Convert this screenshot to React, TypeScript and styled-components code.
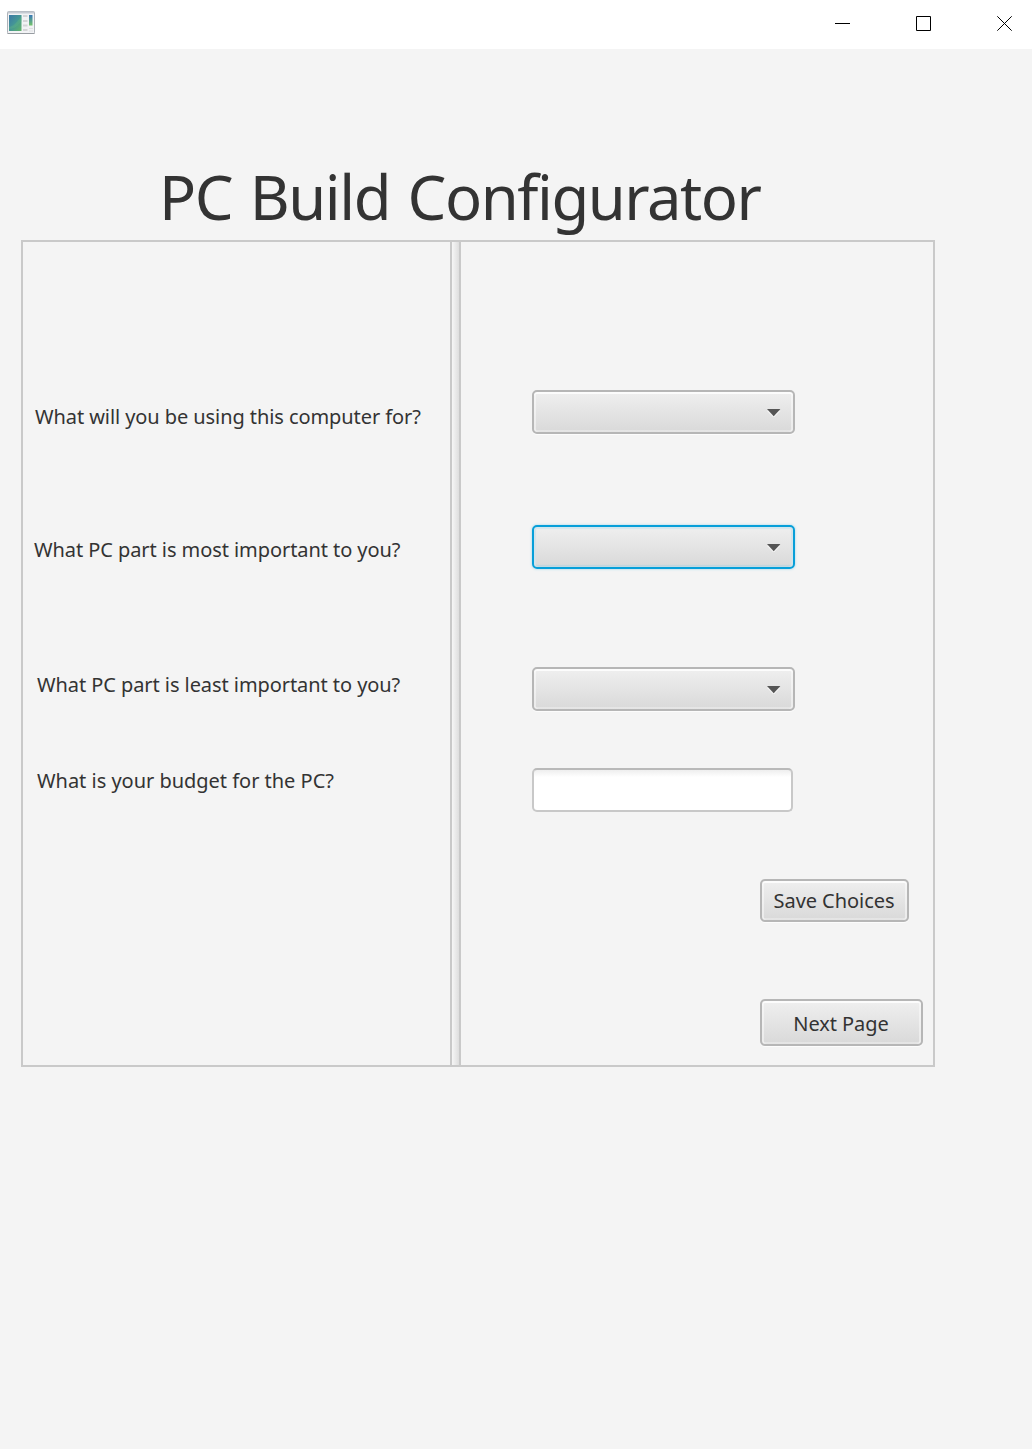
import React from "react";
import styled, { createGlobalStyle } from "styled-components";

const GlobalStyle = createGlobalStyle`
  *, *::before, *::after { box-sizing: border-box; }
  body {
    margin: 0;
    background: #f4f4f4;
    color: #333333;
    font-family: "Noto Sans", "Segoe UI", sans-serif;
    font-variant-ligatures: none;
  }
`;

const Window = styled.div`
  display: flex;
  flex-direction: column;
  width: 1032px;
  height: 1449px;
  background: #f4f4f4;
  overflow: hidden;
`;

const TitleBar = styled.header`
  display: flex;
  align-items: flex-start;
  justify-content: space-between;
  height: 49px;
  flex: none;
  padding: 10px 19px 0 6px;
  background: #ffffff;
`;

const WindowControls = styled.div`
  display: flex;
  gap: 65px;
  padding-top: 5px;
`;

const ControlIcon = styled.svg`
  display: block;
  width: 16px;
  height: 16px;
  fill: none;
  stroke: #000000;
  stroke-width: 1;
`;

const Content = styled.main`
  display: flex;
  flex-direction: column;
  align-items: flex-start;
  padding: 105px 0 0 21px;
`;

const Heading = styled.h1`
  margin: 0 0 2px 138px;
  font-size: 61.5px;
  font-weight: 400;
  line-height: 84px;
  letter-spacing: -1.45px;
  word-spacing: 3px;
  white-space: nowrap;
`;

const SplitPane = styled.section`
  display: grid;
  grid-template-columns: 427px 11px 1fr;
  width: 914px;
  height: 827px;
  border: 2px solid #c9c9c9;
`;

const Divider = styled.div`
  border: solid #c9c9c9;
  border-width: 0 2px;
  background: linear-gradient(to right, #f6f6f6, #dedede);
`;

const Questions = styled.div`
  display: flex;
  flex-direction: column;
  align-items: flex-start;
`;

const Question = styled.label<{ $before: number; $indent: number; $tracking?: number }>`
  margin: ${(p) => p.$before}px 0 0 ${(p) => p.$indent}px;
  font-size: 20px;
  line-height: 28px;
  letter-spacing: ${(p) => p.$tracking ?? 0}px;
  white-space: nowrap;
`;

const Answers = styled.div`
  display: flex;
  flex-direction: column;
  align-items: flex-start;
  padding-left: 71px;
`;

const raised = `
  border: 2px solid #b6b6b6;
  border-radius: 5px;
  background: linear-gradient(to bottom, #efefef, #d9d9d9);
  box-shadow: inset 0 2px 0 #fcfcfc, inset 2px 0 0 rgba(255,255,255,.45),
    inset -2px 0 0 rgba(255,255,255,.45), inset 0 -2px 0 rgba(255,255,255,.3),
    0 1px 1px rgba(255,255,255,.8);
`;

const ComboBox = styled.button<{ $before: number; $focused?: boolean }>`
  ${raised}
  display: flex;
  align-items: center;
  justify-content: flex-end;
  width: 263px;
  height: 44px;
  margin: ${(p) => p.$before}px 0 0;
  padding: 0 12px 0 0;
  outline: none;
  ${(p) =>
    p.$focused &&
    `
    border-color: #079fd9;
    box-shadow: inset 0 2px 1px #d3e6ed, inset 2px 0 1px #d3e3e9,
      inset -2px 0 1px #d3e3e9, inset 0 -2px 1px #c0d5de, 0 0 2px 1px #cbe6f0;
  `}
`;

const Arrow = styled.svg`
  display: block;
  width: 14px;
  height: 9px;
`;

const BudgetField = styled.input`
  width: 261px;
  height: 44px;
  margin: 57px 0 0;
  padding: 0 12px;
  border: 2px solid #c8c8c8;
  border-top-color: #b9b9b9;
  border-radius: 5px;
  background: linear-gradient(to bottom, #eeeeee, #ffffff 7px);
  font: inherit;
  font-size: 20px;
  outline: none;
`;

const PushButton = styled.button<{ $before: number; $width: number; $height: number; $drop?: number }>`
  ${raised}
  width: ${(p) => p.$width}px;
  height: ${(p) => p.$height}px;
  margin: ${(p) => p.$before}px 0 0 228px;
  padding: ${(p) => p.$drop ?? 0}px 1px 0 0;
  color: #333333;
  font-family: inherit;
  font-size: 20px;
  line-height: 28px;
  letter-spacing: -0.06px;
  white-space: nowrap;
`;

const AppIcon = () => (
  <svg width="30" height="26" viewBox="0 0 30 26" aria-hidden="true">
    <defs>
      <linearGradient id="pane" x1="0" y1="0" x2="1" y2="1">
        <stop offset="0" stopColor="#3b78a6" />
        <stop offset=".5" stopColor="#459795" />
        <stop offset="1" stopColor="#63b567" />
      </linearGradient>
      <linearGradient id="strip" x1="0" y1="0" x2="0" y2="1">
        <stop offset="0" stopColor="#3978b6" />
        <stop offset="1" stopColor="#73c46a" />
      </linearGradient>
    </defs>
    <rect x="1.5" y="1.5" width="27" height="22" rx="1" fill="#f2f3f5" stroke="#aeb3b9" />
    <path d="M2 2.5h26" stroke="#c5cad2" strokeWidth="2" />
    <path d="M1.5 23.5h27" stroke="#979ca1" />
    <rect x="3" y="5" width="12.5" height="16" fill="url(#pane)" />
    <path d="M3 17c5-1 8-5 12.5-11v5C12 16 8 19 3 19z" fill="#68bd82" opacity=".3" />
    <path d="M17 6h4.5M17 11h4.5M17 15.5h4.5M17 20h4.5" stroke="#d4d5d7" strokeWidth="2" />
    <rect x="23" y="5" width="3.5" height="10.5" fill="url(#strip)" />
    <path d="M23 18.5h4M23 21h4" stroke="#dedfe1" />
  </svg>
);

const DropArrow = () => (
  <Arrow viewBox="0 0 14 9" aria-hidden="true">
    <path d="M0 3h13.4L6.7 9.8z" fill="#f3f3f3" />
    <path d="M0 1.1h13.4L6.7 8.2z" fill="#555555" />
  </Arrow>
);

export default function App() {
  return (
    <Window>
      <GlobalStyle />
      <TitleBar>
        <AppIcon />
        <WindowControls>
          <ControlIcon viewBox="0 0 16 16">
            <path d="M0 8.5h15" />
          </ControlIcon>
          <ControlIcon viewBox="0 0 16 16">
            <path d="M.5 1.5h14v14H.5z" />
          </ControlIcon>
          <ControlIcon viewBox="0 0 16 16">
            <path d="M.3 1.3l14.4 14.4M14.7 1.3L.3 15.7" />
          </ControlIcon>
        </WindowControls>
      </TitleBar>
      <Content>
        <Heading>PC Build Configurator</Heading>
        <SplitPane>
          <Questions>
            <Question $before={161} $indent={12} $tracking={-0.08}>What will you be using this computer for?</Question>
            <Question $before={105} $indent={11} $tracking={-0.07}>What PC part is most important to you?</Question>
            <Question $before={107} $indent={14} $tracking={-0.07}>What PC part is least important to you?</Question>
            <Question $before={68} $indent={14} $tracking={-0.02}>What is your budget for the PC?</Question>
          </Questions>
          <Divider />
          <Answers>
            <ComboBox $before={148} aria-label="Use"><DropArrow /></ComboBox>
            <ComboBox $before={91} $focused aria-label="Most important part"><DropArrow /></ComboBox>
            <ComboBox $before={98} aria-label="Least important part"><DropArrow /></ComboBox>
            <BudgetField aria-label="Budget" />
            <PushButton $before={67} $width={149} $height={43}>Save Choices</PushButton>
            <PushButton $before={77} $width={163} $height={47} $drop={2}>Next Page</PushButton>
          </Answers>
        </SplitPane>
      </Content>
    </Window>
  );
}
